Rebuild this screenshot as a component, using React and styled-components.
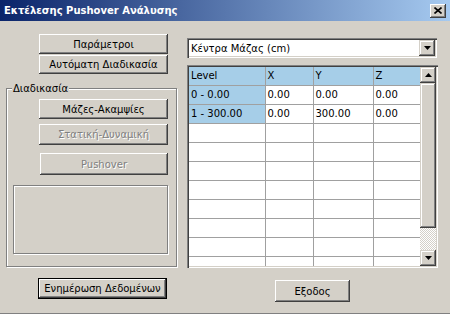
import React from 'react';
import styled, { createGlobalStyle } from 'styled-components';

const FONT = `"DejaVu Sans", Verdana, sans-serif`;

const Global = createGlobalStyle`
  html, body { margin: 0; padding: 0; background: #d4d0c8; }
  * { box-sizing: border-box; }
`;

const Window = styled.div`
  width: 450px;
  height: 314px;
  background: #d4d0c8;
  font-family: ${FONT};
  font-size: 10px;
  color: #000;
  display: flex;
  flex-direction: column;
  overflow: hidden;
  border-bottom: 1px solid #808080;
`;

const TitleBar = styled.div`
  height: 21px;
  flex: none;
  display: flex;
  align-items: center;
  justify-content: space-between;
  padding: 0 4px 0 4px;
  background: linear-gradient(to right, #0a246a 0%, #a6caf0 100%);
  color: #fff;
  font-weight: bold;
  font-size: 10px;
`;

const CloseBtn = styled.div`
  width: 16px;
  height: 14px;
  background: #d4d0c8;
  display: flex;
  align-items: center;
  justify-content: center;
  box-shadow: inset -1px -1px #404040, inset 1px 1px #fff, inset -2px -2px #808080;
`;

const Body = styled.div`
  flex: 1;
  display: flex;
`;

const LeftPane = styled.div`
  width: 181px;
  flex: none;
  display: flex;
  flex-direction: column;
  padding: 13px 0 0 6px;
`;

const RightPane = styled.div`
  flex: 1;
  display: flex;
  flex-direction: column;
  padding: 17px 0 0 6px;
`;

const Button = styled.button`
  flex: none;
  width: ${p => p.$w || 129}px;
  height: ${p => p.$h || 20}px;
  margin: ${p => p.$m || '0'};
  padding: 0;
  border: none;
  background: #d4d0c8;
  font-family: ${FONT};
  font-size: 10px;
  color: ${p => (p.disabled ? '#808080' : '#000')};
  text-shadow: ${p => (p.disabled ? '1px 1px 0 #fff' : 'none')};
  box-shadow: ${p =>
    p.$default
      ? 'inset 0 0 0 1px #000, inset -2px -2px #404040, inset 2px 2px #fff, inset -3px -3px #808080'
      : 'inset -1px -1px #404040, inset 1px 1px #fff, inset -2px -2px #808080, inset 2px 2px #d4d0c8'};
  cursor: default;
`;

const Group = styled.div`
  position: relative;
  width: 171px;
  height: 179px;
  margin-top: 14px;
  border: 1px solid #808080;
  box-shadow: inset 1px 1px #fff, 1px 1px #fff;
  padding: 10px 0 0 6px;
  display: flex;
  flex-direction: column;
`;

const GroupLabel = styled.span`
  position: absolute;
  top: -7px;
  left: 5px;
  padding: 0 1px;
  line-height: 13px;
  background: #d4d0c8;
`;

const Frame = styled.div`
  width: 155px;
  height: 69px;
  margin-top: 10px;
  border: 1px solid #808080;
  box-shadow: inset 1px 1px #fff, 1px 1px #fff;
`;

const Combo = styled.div`
  width: 250px;
  height: 20px;
  background: #fff;
  display: flex;
  align-items: center;
  justify-content: space-between;
  padding: 2px;
  box-shadow: inset 1px 1px #808080, inset 2px 2px #404040, inset -1px -1px #fff, inset -2px -2px #d4d0c8;
`;

const ComboText = styled.span`
  padding-left: 2px;
`;

const ArrowBtn = styled.div`
  width: 16px;
  height: 16px;
  flex: none;
  background: #d4d0c8;
  display: flex;
  align-items: center;
  justify-content: center;
  box-shadow: inset -1px -1px #404040, inset 1px 1px #d4d0c8, inset -2px -2px #808080, inset 2px 2px #fff;
`;

const Grid = styled.div`
  width: 251px;
  height: 203px;
  margin-top: 7px;
  padding: 2px;
  display: flex;
  background: #fff;
  box-shadow: inset 1px 1px #808080, inset 2px 2px #404040, inset -1px -1px #fff, inset -2px -2px #d4d0c8;
`;

const TableWrap = styled.div`
  width: 231px;
  height: 199px;
  overflow: hidden;
  flex: none;
`;

const Table = styled.table`
  border-collapse: collapse;
  table-layout: fixed;
  width: 231px;
`;

const Cell = styled.td`
  height: 19px;
  padding: 0 0 0 2px;
  border-right: 1px solid #a0a0a0;
  border-bottom: 1px solid #a0a0a0;
  background: ${p => (p.$fixed ? '#a6cee8' : '#fff')};
  white-space: nowrap;
  font-size: 10px;
  line-height: 18px;
  vertical-align: middle;
`;

const HeadCell = styled(Cell).attrs({ as: 'th' })`
  font-weight: normal;
  text-align: left;
  background: #a6cee8;
  height: 18px;
`;

const ScrollBar = styled.div`
  width: 16px;
  height: 199px;
  flex: none;
  display: flex;
  flex-direction: column;
`;

const Thumb = styled.div`
  height: 145px;
  flex: none;
  background: #d4d0c8;
  box-shadow: inset -1px -1px #404040, inset 1px 1px #d4d0c8, inset -2px -2px #808080, inset 2px 2px #fff;
`;

const Track = styled.div`
  flex: 1;
  background-color: #d4d0c8;
  background-image: repeating-conic-gradient(#ffffff 0 25%, #d4d0c8 0 50%);
  background-size: 2px 2px;
`;

const Tri = ({ up }) => (
  <svg width="7" height="4" viewBox="0 0 7 4">
    <path d={up ? 'M3.5 0 L7 4 L0 4 Z' : 'M0 0 L7 0 L3.5 4 Z'} fill="#000" />
  </svg>
);

const XIcon = () => (
  <svg width="8" height="7" viewBox="0 0 8 7">
    <path d="M0.5 0.5 L7.5 6.5 M7.5 0.5 L0.5 6.5" stroke="#000" strokeWidth="1.6" />
  </svg>
);

const rows = [
  ['0 - 0.00', '0.00', '0.00', '0.00'],
  ['1 - 300.00', '0.00', '300.00', '0.00'],
  ...Array.from({ length: 9 }, () => ['', '', '', '']),
];

export default function App() {
  return (
    <>
      <Global />
      <Window>
        <TitleBar>
          <span>Εκτέλεσης Pushover Ανάλυσης</span>
          <CloseBtn><XIcon /></CloseBtn>
        </TitleBar>
        <Body>
          <LeftPane>
            <Button $m="0 0 0 33px" $h={20}>Παράμετροι</Button>
            <Button $m="1px 0 0 33px" $h={19}>Αυτόματη Διαδικασία</Button>
            <Group>
              <GroupLabel>Διαδικασία</GroupLabel>
              <Button $m="0 0 0 26px" $h={20}>Μάζες-Ακαμψίες</Button>
              <Button $m="5px 0 0 26px" $h={21} disabled>Στατική-Δυναμική</Button>
              <Button $m="8px 0 0 27px" $w={128} $h={22} disabled>Pushover</Button>
              <Frame />
            </Group>
            <Button $m="11px 0 0 32px" $h={21} $default>Ενημέρωση Δεδομένων</Button>
          </LeftPane>
          <RightPane>
            <Combo>
              <ComboText>Κέντρα Μάζας (cm)</ComboText>
              <ArrowBtn><Tri /></ArrowBtn>
            </Combo>
            <Grid>
              <TableWrap>
                <Table>
                  <colgroup>
                    <col style={{ width: 76 }} />
                    <col style={{ width: 48 }} />
                    <col style={{ width: 60 }} />
                    <col style={{ width: 47 }} />
                  </colgroup>
                  <thead>
                    <tr>
                      <HeadCell>Level</HeadCell>
                      <HeadCell>X</HeadCell>
                      <HeadCell>Y</HeadCell>
                      <HeadCell>Z</HeadCell>
                    </tr>
                  </thead>
                  <tbody>
                    {rows.map((r, i) => (
                      <tr key={i}>
                        <Cell $fixed={r[0] !== ''}>{r[0]}</Cell>
                        <Cell>{r[1]}</Cell>
                        <Cell>{r[2]}</Cell>
                        <Cell>{r[3]}</Cell>
                      </tr>
                    ))}
                  </tbody>
                </Table>
              </TableWrap>
              <ScrollBar>
                <ArrowBtn><Tri up /></ArrowBtn>
                <Thumb />
                <Track />
                <ArrowBtn><Tri /></ArrowBtn>
              </ScrollBar>
            </Grid>
            <Button $m="12px 0 0 88px" $w={75} $h={22}>Εξοδος</Button>
          </RightPane>
        </Body>
      </Window>
    </>
  );
}
